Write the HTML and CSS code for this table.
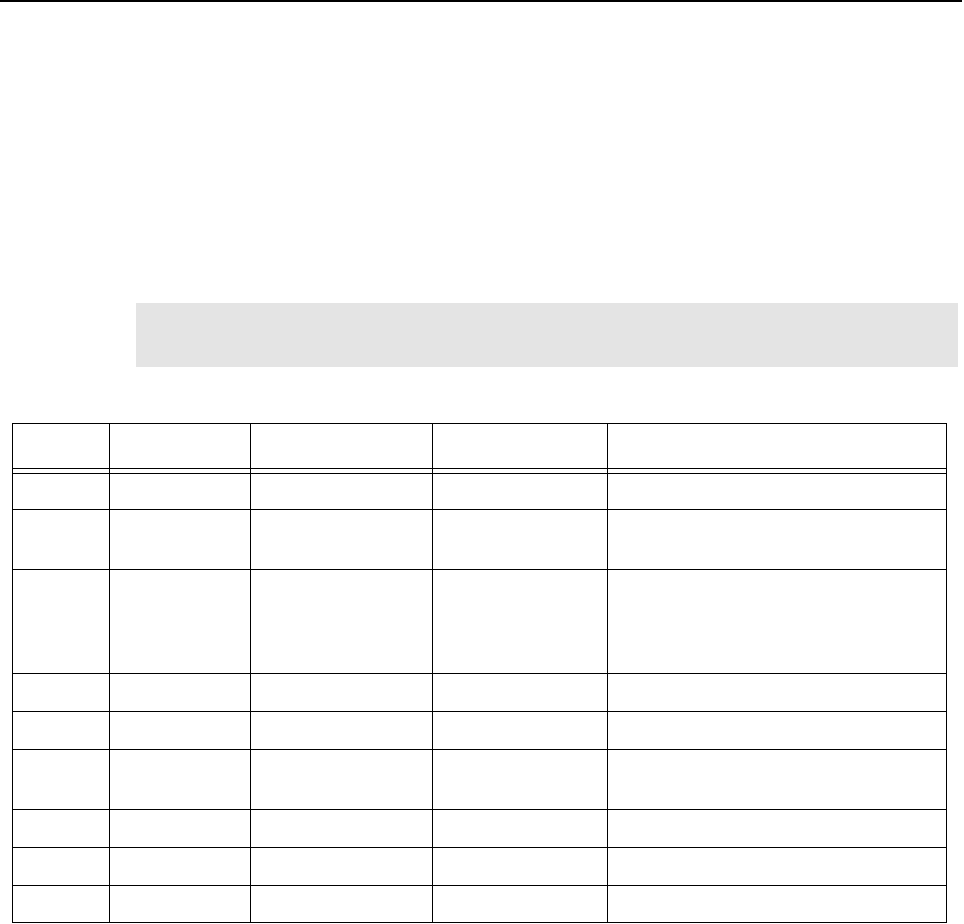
FILE: index.html
```html
<!DOCTYPE html>
<html lang="en">
<head>
<meta charset="utf-8">
<title>Table</title>
<link rel="stylesheet" href="styles.css">
</head>
<body>
<div class="page">
  <div class="rule"></div>
  <div class="note"></div>
  <table class="grid">
    <colgroup>
      <col class="c1"><col class="c2"><col class="c3"><col class="c4"><col class="c5">
    </colgroup>
    <thead>
      <tr class="head"><th></th><th></th><th></th><th></th><th></th></tr>
    </thead>
    <tbody>
      <tr class="gap"><td></td><td></td><td></td><td></td><td></td></tr>
      <tr class="r36"><td></td><td></td><td></td><td></td><td></td></tr>
      <tr class="r60"><td></td><td></td><td></td><td></td><td></td></tr>
      <tr class="r104"><td></td><td></td><td></td><td></td><td></td></tr>
      <tr class="r38"><td></td><td></td><td></td><td></td><td></td></tr>
      <tr class="r38"><td></td><td></td><td></td><td></td><td></td></tr>
      <tr class="r60"><td></td><td></td><td></td><td></td><td></td></tr>
      <tr class="r38"><td></td><td></td><td></td><td></td><td></td></tr>
      <tr class="r38"><td></td><td></td><td></td><td></td><td></td></tr>
      <tr class="r37"><td></td><td></td><td></td><td></td><td></td></tr>
    </tbody>
  </table>
</div>
</body>
</html>
```
FILE: styles.css
```css
html, body {
  margin: 0;
  padding: 0;
  background: #fff;
  font-family: "Liberation Sans", Arial, sans-serif;
}

.page {
  display: flex;
  flex-direction: column;
  align-items: flex-start;
}

.rule {
  width: 962px;
  height: 2px;
  background: #000;
}

.note {
  margin: 301px 0 0 136px;
  width: 822px;
  height: 64px;
  background: #e4e4e4;
}

.grid {
  margin: 56px 0 0 12px;
  table-layout: fixed;
  border-collapse: separate;
  border-spacing: 0;
  width: 935px;
  border-left: 1px solid #000;
  border-top: 1px solid #000;
  font-size: 0;
}

.c1 { width: 97px; }
.c2 { width: 141px; }
.c3 { width: 182px; }
.c4 { width: 175px; }
.c5 { width: 339px; }

.grid th,
.grid td {
  box-sizing: border-box;
  padding: 0;
  border-right: 1px solid #000;
  border-bottom: 1px solid #000;
  font-size: 0;
  line-height: 0;
}

.head th { height: 45px; }
.gap td { height: 5px; }
.r36 td { height: 36px; }
.r37 td { height: 37px; }
.r38 td { height: 38px; }
.r60 td { height: 60px; }
.r104 td { height: 104px; }
```
